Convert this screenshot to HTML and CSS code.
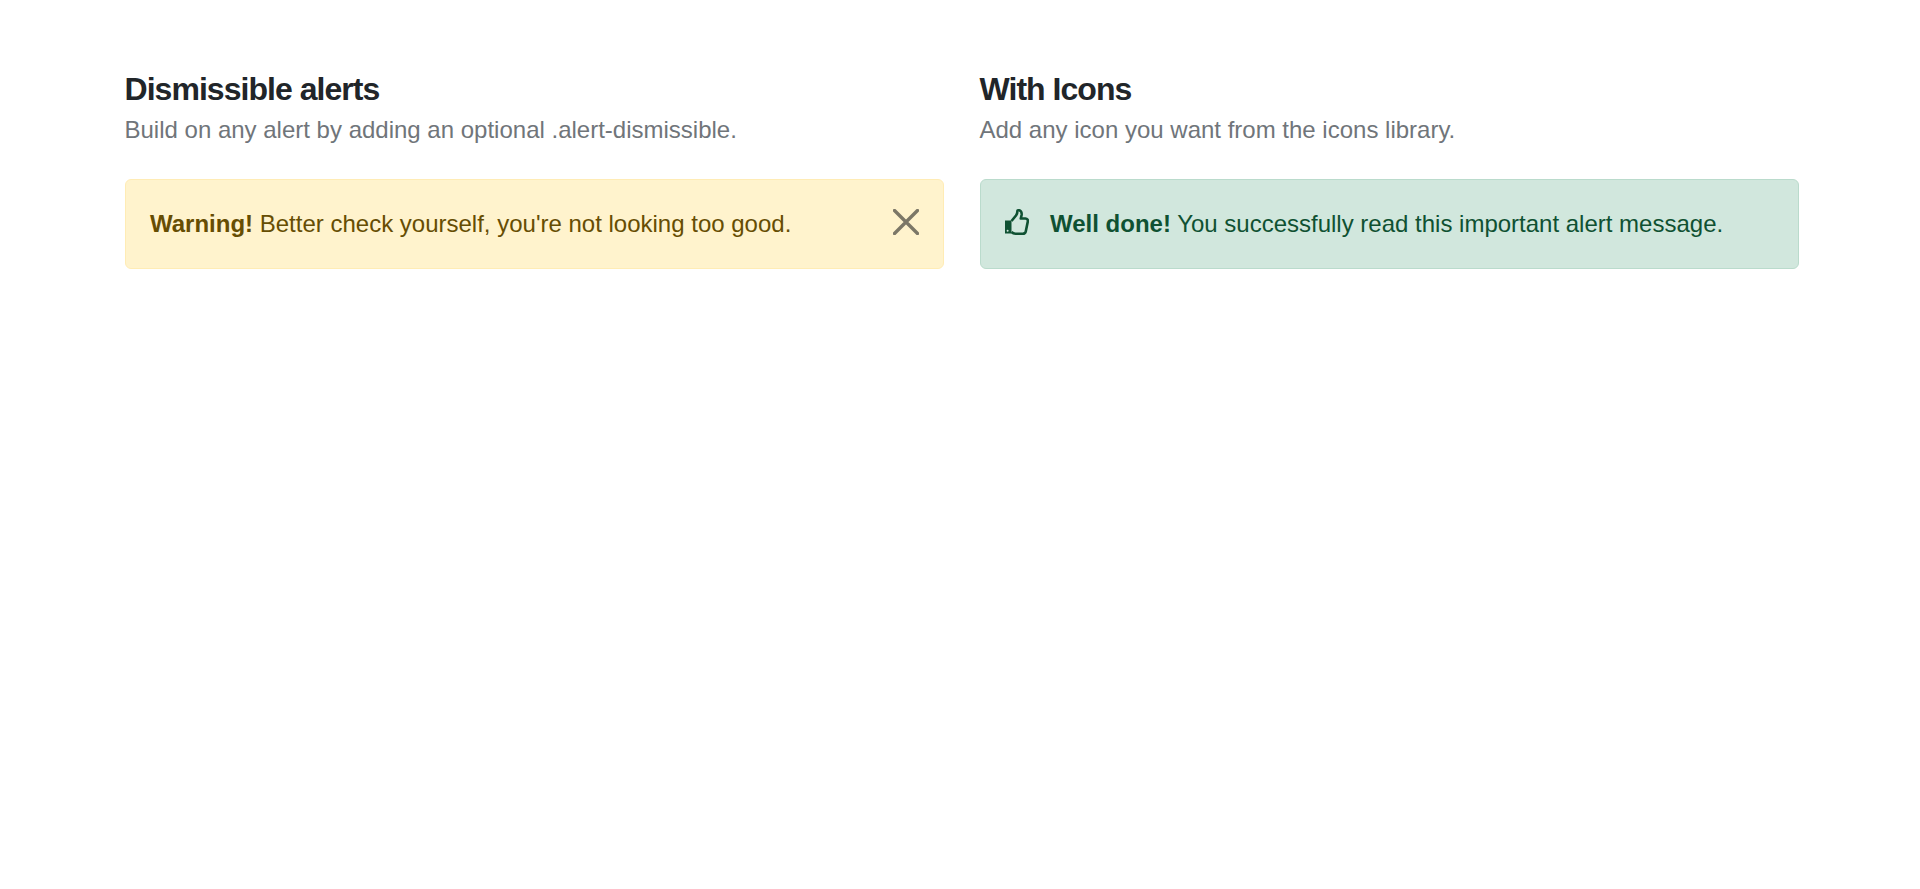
FILE: index.html
```html
<!DOCTYPE html>
<html lang="en">
<head>
<meta charset="utf-8">
<title>Alerts</title>
<link rel="stylesheet" href="styles.css">
</head>
<body>
<main class="grid">
  <section class="col">
    <h2 class="title">Dismissible alerts</h2>
    <p class="sub">Build on any alert by adding an optional .alert-dismissible.</p>
    <div class="alert warning">
      <span class="msg"><strong>Warning!</strong> Better check yourself, you're not looking too good.</span>
      <svg class="close" viewBox="0 0 26 26" width="26" height="26"><path d="M1.5 1.5L24.5 24.5M24.5 1.5L1.5 24.5"/></svg>
    </div>
  </section>
  <section class="col">
    <h2 class="title">With Icons</h2>
    <p class="sub">Add any icon you want from the icons library.</p>
    <div class="alert success">
      <svg class="thumb" viewBox="0 0 24 26" width="24" height="26"><path class="thumb-cuff" d="M0 11.5H6.5V24.5H0Z"/><circle class="thumb-dot" cx="2.6" cy="21.8" r="1"/><path class="thumb-line" d="M6.5 12L11 6.5C12 5 12.5 3.5 12.5 1.5C15.5 0.5 17 3 16.6 6L15.8 9.5H20.5C22.3 9.5 23.2 11 22.8 12.6L20.8 22.3C20.4 23.8 19.3 24.7 17.8 24.7H10.5C8.5 24.7 7.5 24 6.5 23"/></svg>
      <span class="msg"><strong>Well done!</strong> You successfully read this important alert message.</span>
    </div>
  </section>
</main>
</body>
</html>
```
FILE: styles.css
```css
* { box-sizing: border-box; }
html, body { margin: 0; padding: 0; background: #fff; }
body { font-family: "Liberation Sans", Arial, sans-serif; color: #212529; }
.grid {
  display: grid;
  grid-template-columns: 819.5px 819.5px;
  column-gap: 35.5px;
  padding: 70px 120px 0 124.5px;
}
.title {
  margin: 0;
  font-size: 32px;
  line-height: 38px;
  font-weight: 700;
  letter-spacing: -0.96px;
  color: #212529;
}
.sub {
  margin: 4px 0 0;
  font-size: 24px;
  line-height: 36px;
  color: #70757a;
}
.alert {
  display: flex;
  align-items: center;
  height: 90px;
  margin-top: 31px;
  padding: 0 24.5px;
  border: 1px solid;
  border-radius: 6px;
  font-size: 24px;
}
.warning { background: #fff3cd; border-color: #ffecb5; color: #664d03; justify-content: space-between; padding-right: 24px; }
.success { background: #d1e7dd; border-color: #badbcc; color: #0f5132; gap: 21px; }
.close { margin-bottom: 5px; fill: none; stroke: #7c7767; stroke-width: 3.4; stroke-linecap: round; }
.thumb { margin-bottom: 4px; }
.thumb-cuff { fill: #0f5132; }
.thumb-dot { fill: #d1e7dd; }
.thumb-line { fill: none; stroke: #0f5132; stroke-width: 2.6; stroke-linejoin: round; }
```
